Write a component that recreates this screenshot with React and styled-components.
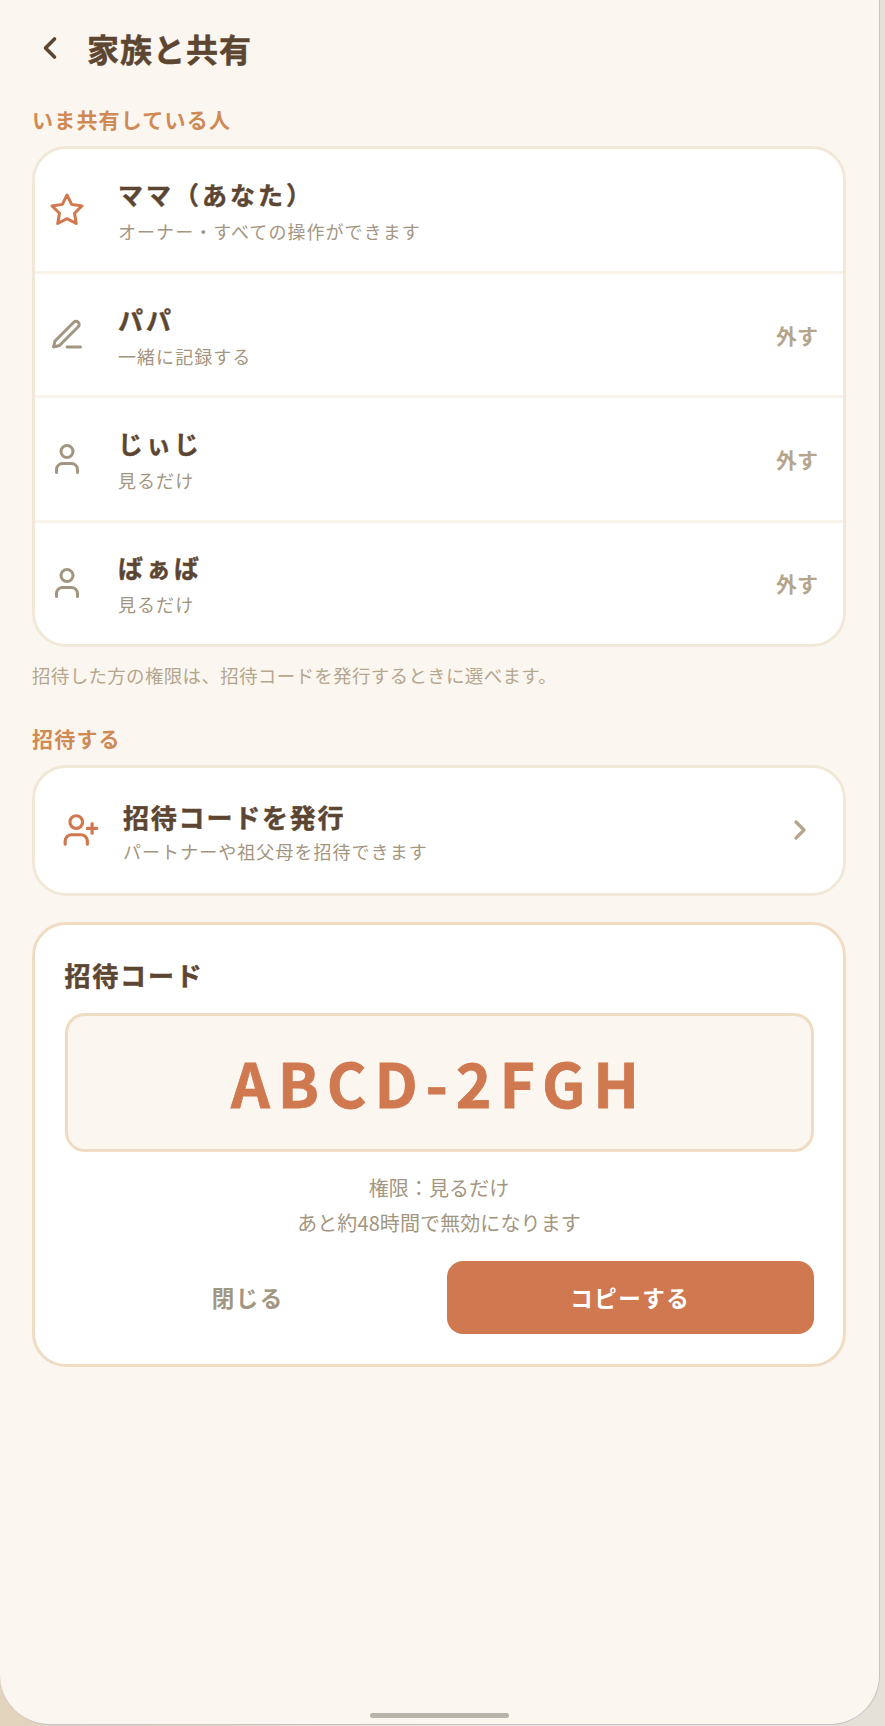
import React from "react";
import styled, { createGlobalStyle } from "styled-components";
import { ChevronLeft, ChevronRight, User, UserPlus } from "lucide-react";

const GlobalStyle = createGlobalStyle`
  html, body {
    margin: 0;
    padding: 0;
    background: #e5e1d9;
  }
  * {
    box-sizing: border-box;
  }
`;

const Frame = styled.div`
  width: 885px;
  height: 1726px;
  overflow: hidden;
  background: linear-gradient(90deg, #e2d3bc 0%, #e5e1d9 60%);
  font-family: "Noto Sans CJK JP", "Noto Sans", sans-serif;
`;

const Screen = styled.main`
  position: relative;
  width: 880px;
  height: 1725px;
  padding: 0 33px 0 32px;
  background: #fbf7f0;
  border-right: 1px solid #c9c5bc;
  border-bottom: 1px solid #c6c2c8;
  border-radius: 0 0 50px 50px;
`;

const Header = styled.header`
  display: flex;
  align-items: center;
  height: 96px;
  color: #5c4632;
`;

const BackIcon = styled(ChevronLeft)`
  width: 36px;
  height: 36px;
  margin-right: 19px;
  stroke-width: 2.4;
`;

const Title = styled.h1`
  margin: 0;
  font-size: 32px;
  font-weight: 700;
  letter-spacing: 1px;
  -webkit-text-stroke: 0.5px currentColor;
`;

const SectionLabel = styled.h2`
  margin: 8.4px 0 12px;
  font-size: 21px;
  line-height: 30px;
  font-weight: 700;
  letter-spacing: 1.2px;
  color: #cf8a56;
`;

const Card = styled.section`
  background: #fff;
  border: 3px solid ${(p) => (p.$strong ? "#f0dcc3" : "#f2e8d8")};
  border-radius: 34px;
  overflow: hidden;
`;

const Row = styled.div`
  display: flex;
  align-items: center;
  height: 124.5px;
  padding: 0 25px 0 14px;
  border-top: 3px solid #f9f2e8;

  &:first-child {
    height: 121.4px;
    border-top: 0;
  }
  &:last-child {
    height: 123.9px;
  }
`;

const RowIcon = styled.svg`
  flex: none;
  width: 36px;
  height: 36px;
  margin-right: 33px;
  fill: none;
  stroke: ${(p) => p.$color};
  stroke-width: 2;
  stroke-linecap: round;
  stroke-linejoin: round;
`;

const RowBody = styled.div`
  flex: 1;
  min-width: 0;
`;

const Name = styled.div`
  font-size: 25px;
  line-height: 36px;
  font-weight: 700;
  letter-spacing: 3px;
  color: #5c4632;
  -webkit-text-stroke: 0.4px currentColor;
`;

const Sub = styled.div`
  margin-top: 6px;
  font-size: 18px;
  line-height: 26px;
  font-weight: 400;
  letter-spacing: 1.05px;
  color: #a39680;
`;

const RemoveLabel = styled.span`
  font-size: 21px;
  font-weight: 700;
  color: #b5a58d;
`;

const Note = styled.p`
  margin: 14px 0 34px;
  font-size: 18.5px;
  line-height: 28px;
  font-weight: 400;
  letter-spacing: 0.32px;
  color: #b5a68f;
`;

const InviteRow = styled.div`
  display: flex;
  align-items: center;
  height: 125px;
  padding: 0 27px 0 27px;
`;

const InviteIcon = styled(UserPlus)`
  flex: none;
  width: 38px;
  height: 38px;
  margin-right: 23px;
  color: #d0784f;
`;

const InviteBody = styled.div`
  flex: 1;
  min-width: 0;
  padding-top: 2px;
`;

const InviteTitle = styled.div`
  font-size: 26px;
  line-height: 36px;
  font-weight: 700;
  letter-spacing: 1.8px;
  color: #5c4632;
  -webkit-text-stroke: 0.5px currentColor;
`;

const InviteSub = styled(Sub)`
  margin-top: 3px;
`;

const ForwardIcon = styled(ChevronRight)`
  flex: none;
  width: 32px;
  height: 32px;
  stroke-width: 2.4;
  color: #b5a58d;
`;

const CodeCard = styled(Card)`
  margin-top: 26px;
  padding: 32px 29.5px 30px;
`;

const CodeTitle = styled.h3`
  margin: 0 0 20px;
  font-size: 26px;
  line-height: 36px;
  font-weight: 700;
  letter-spacing: 1.8px;
  color: #5c4632;
  -webkit-text-stroke: 0.5px currentColor;
`;

const CodeBox = styled.div`
  display: flex;
  align-items: center;
  justify-content: center;
  height: 139px;
  padding-bottom: 2px;
  background: #fbf7f0;
  border: 3px solid #f0dcc3;
  border-radius: 20px;
  font-size: 60.5px;
  font-weight: 700;
  letter-spacing: 7.9px;
  color: #d0784f;
  -webkit-text-stroke: 0.8px currentColor;
`;

const CodeInfo = styled.p`
  margin: 18px 0 21px;
  font-size: 20px;
  line-height: 35px;
  font-weight: 400;
  letter-spacing: 0.1px;
  text-align: center;
  color: #a39680;
`;

const Actions = styled.div`
  display: grid;
  grid-template-columns: 1fr 1fr;
  gap: 16px;
`;

const ActionButton = styled.button`
  height: 73px;
  border: 0;
  border-radius: 16px;
  background: ${(p) => (p.$primary ? "#d0784f" : "transparent")};
  color: ${(p) => (p.$primary ? "#fff" : "#a39680")};
  font-family: inherit;
  font-size: 22.5px;
  font-weight: 700;
  letter-spacing: 1.5px;
`;

const HomeBar = styled.div`
  position: absolute;
  left: 370px;
  bottom: 6px;
  width: 139px;
  height: 5px;
  border-radius: 3px;
  background: #b9b4a9;
`;

const StarGlyph = ({ color }) => (
  <RowIcon $color={color} viewBox="0 0 24 24">
    <polygon points="12 2 15.09 8.26 22 9.27 17 14.14 18.18 21.02 12 17.77 5.82 21.02 7 14.14 2 9.27 8.91 8.26 12 2" />
  </RowIcon>
);

const PenGlyph = ({ color }) => (
  <RowIcon $color={color} viewBox="0 0 24 24">
    <path d="M12 20h9" />
    <path d="M16.5 3.5a2.12 2.12 0 0 1 3 3L7 19l-4 1 1-4Z" />
  </RowIcon>
);

const PersonGlyph = ({ color }) => (
  <RowIcon as={User} $color={color} />
);

const members = [
  { name: "ママ（あなた）", role: "オーナー・すべての操作ができます", Icon: StarGlyph, color: "#d0784f" },
  { name: "パパ", role: "一緒に記録する", Icon: PenGlyph, color: "#a39680", removable: true },
  { name: "じぃじ", role: "見るだけ", Icon: PersonGlyph, color: "#a39680", removable: true },
  { name: "ばぁば", role: "見るだけ", Icon: PersonGlyph, color: "#a39680", removable: true },
];

export default function App() {
  return (
    <Frame>
      <GlobalStyle />
      <Screen>
        <Header>
          <BackIcon />
          <Title>家族と共有</Title>
        </Header>
        <SectionLabel>いま共有している人</SectionLabel>
        <Card>
          {members.map(({ name, role, Icon, color, removable }) => (
            <Row key={name}>
              <Icon color={color} />
              <RowBody>
                <Name>{name}</Name>
                <Sub>{role}</Sub>
              </RowBody>
              {removable && <RemoveLabel>外す</RemoveLabel>}
            </Row>
          ))}
        </Card>
        <Note>招待した方の権限は、招待コードを発行するときに選べます。</Note>
        <SectionLabel>招待する</SectionLabel>
        <Card>
          <InviteRow>
            <InviteIcon />
            <InviteBody>
              <InviteTitle>招待コードを発行</InviteTitle>
              <InviteSub>パートナーや祖父母を招待できます</InviteSub>
            </InviteBody>
            <ForwardIcon />
          </InviteRow>
        </Card>
        <CodeCard $strong>
          <CodeTitle>招待コード</CodeTitle>
          <CodeBox>ABCD-2FGH</CodeBox>
          <CodeInfo>
            権限：見るだけ
            <br />
            あと約48時間で無効になります
          </CodeInfo>
          <Actions>
            <ActionButton>閉じる</ActionButton>
            <ActionButton $primary>コピーする</ActionButton>
          </Actions>
        </CodeCard>
        <HomeBar />
      </Screen>
    </Frame>
  );
}
